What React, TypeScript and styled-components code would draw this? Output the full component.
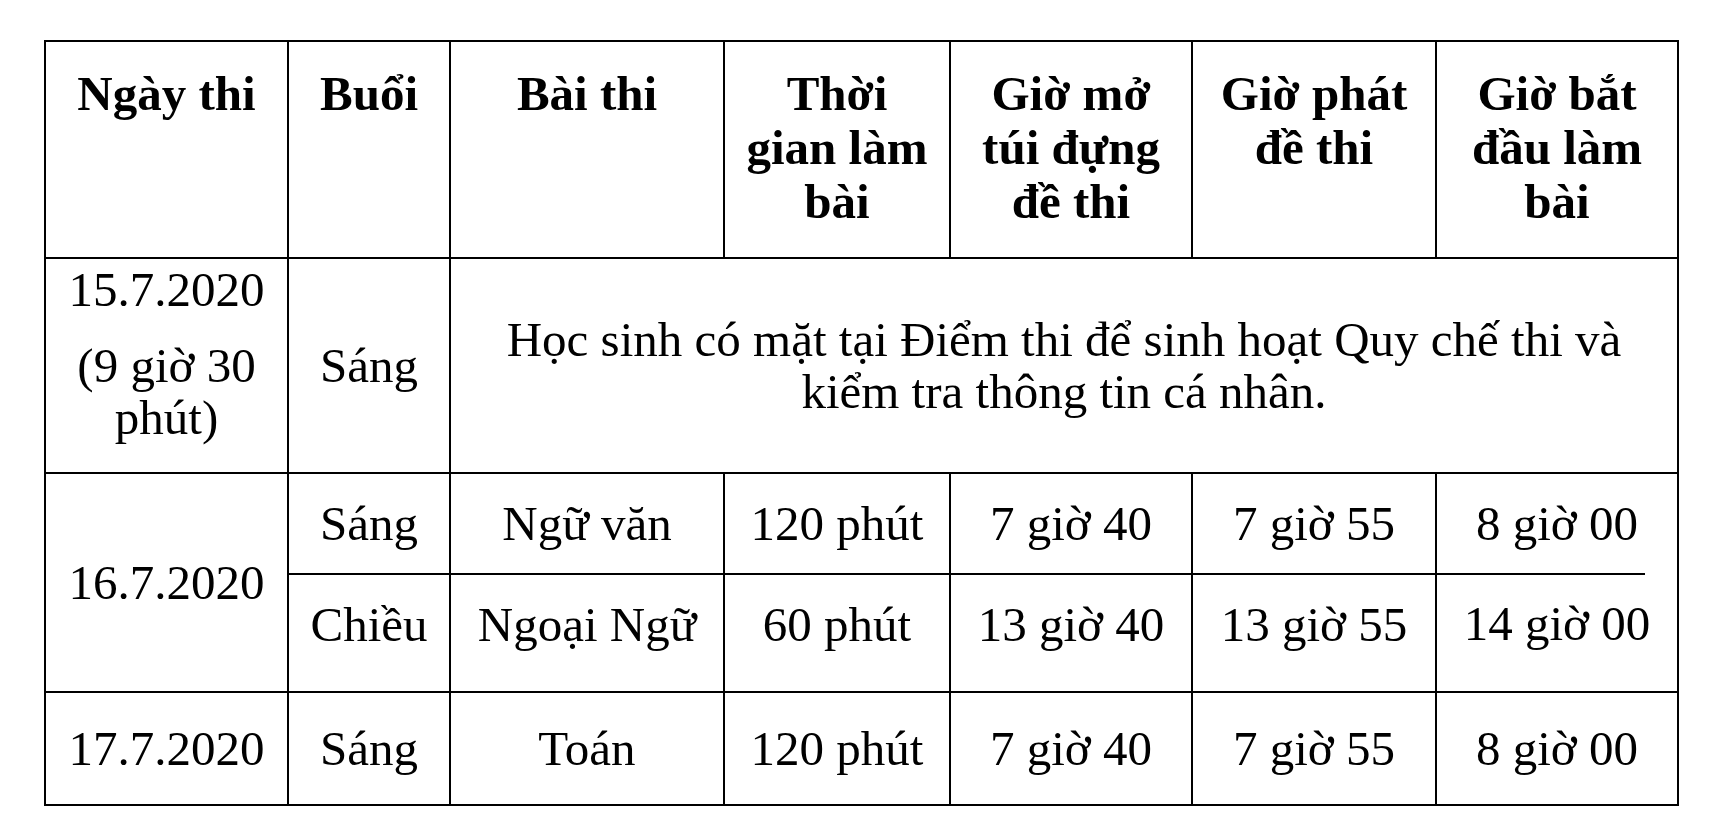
import React from "react";
import styled, { createGlobalStyle, css } from "styled-components";

const Global = createGlobalStyle`
  html, body { margin: 0; padding: 0; background: #ffffff; }
  body { font-family: "Liberation Serif", "Times New Roman", serif; color: #000; }
`;

const Page = styled.div`
  padding: 40px 0 0 44px;
`;

const Table = styled.table`
  border-collapse: collapse;
  table-layout: fixed;
  width: 1635px;
  font-family: "Liberation Serif", "Times New Roman", serif;
  font-size: 49px;
  color: #000;
`;

const Col = styled.col<{ $w: number }>`
  width: ${(p) => p.$w}px;
`;

const Row = styled.tr<{ $h: number }>`
  height: ${(p) => p.$h}px;
`;

const HeadCell = styled.th`
  border: 2px solid #000;
  font-weight: 700;
  text-align: center;
  vertical-align: top;
  padding: 25px 6px 0;
  line-height: 54px;
`;

const Cell = styled.td<{ $top?: boolean; $pt?: number; $pb?: number; $cut?: boolean }>`
  border: 2px solid #000;
  font-weight: 400;
  text-align: center;
  vertical-align: ${(p) => (p.$top ? "top" : "middle")};
  padding: ${(p) => p.$pt ?? 0}px 6px ${(p) => p.$pb ?? 0}px;
  line-height: 52px;
  position: relative;
  ${(p) =>
    p.$cut &&
    css`
      border-bottom-style: hidden;
      &::after {
        content: "";
        position: absolute;
        left: 0;
        bottom: -1px;
        width: 208px;
        height: 2px;
        background: #000;
      }
    `}
`;

const Para = styled.div<{ $gap?: number }>`
  margin-bottom: ${(p) => p.$gap ?? 0}px;
`;

const headers: string[][] = [
  ["Ngày thi"],
  ["Buổi"],
  ["Bài thi"],
  ["Thời", "gian làm", "bài"],
  ["Giờ mở", "túi đựng", "đề thi"],
  ["Giờ phát", "đề thi"],
  ["Giờ bắt", "đầu làm", "bài"],
];

const widths = [243, 162, 274, 226, 242, 244, 242];

const Lines = ({ lines }: { lines: string[] }) => (
  <>
    {lines.map((l, i) => (
      <React.Fragment key={i}>
        {i > 0 && <br />}
        {l}
      </React.Fragment>
    ))}
  </>
);

export default function App() {
  return (
    <>
      <Global />
      <Page>
        <Table>
          <colgroup>
            {widths.map((w, i) => (
              <Col key={i} $w={w} />
            ))}
          </colgroup>
          <thead>
            <Row $h={217}>
              {headers.map((h, i) => (
                <HeadCell key={i}>
                  <Lines lines={h} />
                </HeadCell>
              ))}
            </Row>
          </thead>
          <tbody>
            <Row $h={215}>
              <Cell $top $pt={5}>
                <Para $gap={24}>15.7.2020</Para>
                <Para>
                  (9 giờ 30
                  <br />
                  phút)
                </Para>
              </Cell>
              <Cell>Sáng</Cell>
              <Cell colSpan={5}>
                Học sinh có mặt tại Điểm thi để sinh hoạt Quy chế thi và
                <br />
                kiểm tra thông tin cá nhân.
              </Cell>
            </Row>
            <Row $h={101}>
              <Cell rowSpan={2}>16.7.2020</Cell>
              <Cell>Sáng</Cell>
              <Cell>Ngữ văn</Cell>
              <Cell>120 phút</Cell>
              <Cell>7 giờ 40</Cell>
              <Cell>7 giờ 55</Cell>
              <Cell $cut>8 giờ 00</Cell>
            </Row>
            <Row $h={118}>
              <Cell $pb={17}>Chiều</Cell>
              <Cell $pb={17}>Ngoại Ngữ</Cell>
              <Cell $pb={17}>60 phút</Cell>
              <Cell $pb={17}>13 giờ 40</Cell>
              <Cell $pb={17}>13 giờ 55</Cell>
              <Cell $pb={17}>14 giờ 00</Cell>
            </Row>
            <Row $h={113}>
              <Cell>17.7.2020</Cell>
              <Cell>Sáng</Cell>
              <Cell>Toán</Cell>
              <Cell>120 phút</Cell>
              <Cell>7 giờ 40</Cell>
              <Cell>7 giờ 55</Cell>
              <Cell>8 giờ 00</Cell>
            </Row>
          </tbody>
        </Table>
      </Page>
    </>
  );
}
